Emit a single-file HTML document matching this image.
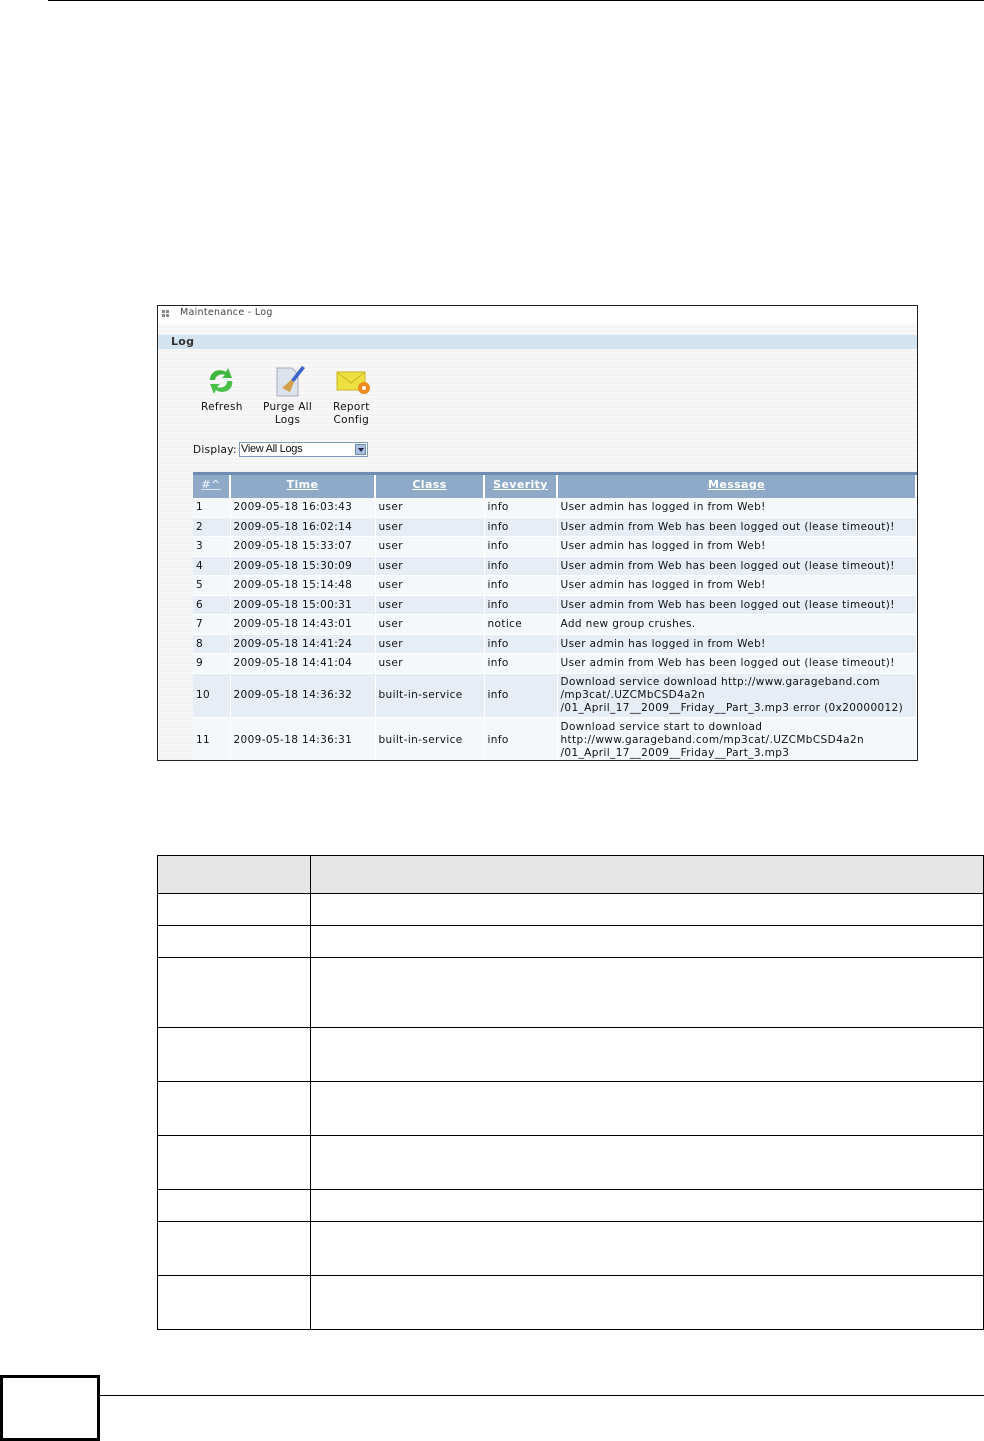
<!DOCTYPE html>
<html><head><meta charset="utf-8"><style>
*{margin:0;padding:0;box-sizing:border-box}
body{width:984px;height:1440px;background:#fff;position:relative;font-family:"DejaVu Sans","Liberation Sans",sans-serif;overflow:hidden}
.a{position:absolute}
.t{font-size:10.5px;color:#111;white-space:nowrap;letter-spacing:0.3px}
.frame{left:157px;top:305px;width:761px;height:456px;border:1px solid #222;background:repeating-linear-gradient(#f3f3f3 0 2px,#f8f8f8 2px 4px);overflow:hidden}
table.log{position:absolute;left:35px;top:166px;border-collapse:collapse;font-size:10.5px;color:#111;letter-spacing:0.38px}
table.log td{border-right:1px solid #fff;border-bottom:1px solid #fff;padding:0 0 0 3px;white-space:nowrap;line-height:13px}
table.log th{background:#8fa9c8;border-top:3px solid #6f8db3;border-right:2px solid #fff;color:#fff;text-decoration:underline;font-size:11px;height:24px;padding-bottom:3px;font-weight:bold}
tr.o td{background:#f5f8fb}
tr.e td{background:#e6edf4}
.bt{position:absolute;left:157px;top:855px;border-collapse:collapse}
.bt td{border:1px solid #000}
</style></head><body>
<div class="a" style="left:48px;top:0;width:936px;height:1px;background:#000"></div>

<div class="a frame">
  <div class="a" style="left:0;top:0;width:760px;height:18px;background:#fff"></div>
  <div class="a" style="left:4px;top:4px;width:3px;height:3px;background:#888;box-shadow:4px 0 #888,0 4px #888,4px 4px #888"></div>
  <div class="a t" style="left:22px;top:1px;font-size:9.5px;color:#444">Maintenance - Log</div>
  <div class="a" style="left:0;top:29px;width:760px;height:14px;background:#d3e3f0"></div>
  <div class="a t" style="left:13px;top:29px;font-weight:bold;color:#333;font-size:11px">Log</div>

  <svg class="a" style="left:46px;top:60px" width="34" height="30" viewBox="0 0 34 30">
    <path d="M6 14 A10 9 0 0 1 22 6 L24 2 L28 12 L18 12 L21 9 A7 6 0 0 0 11 14 Z" fill="#3db83d"/>
    <path d="M28 15 A10 9 0 0 1 12 24 L10 28 L6 18 L16 18 L13 21 A7 6 0 0 0 23 15 Z" fill="#4ac04a"/>
  </svg>
  <svg class="a" style="left:116px;top:58px" width="34" height="34" viewBox="0 0 34 34">
    <path d="M3 4 L18 4 L24 10 L24 32 L3 32 Z" fill="#dde3ec" stroke="#aab" stroke-width="1"/>
    <path d="M28 2 L31 4 L20 18 L17 16 Z" fill="#3a64c8"/>
    <path d="M17 16 L20 18 L16 28 L8 24 Z" fill="#d4a04a"/>
  </svg>
  <svg class="a" style="left:178px;top:64px" width="36" height="26" viewBox="0 0 36 26">
    <rect x="1" y="2" width="28" height="18" fill="#eee040" stroke="#c9b520"/>
    <path d="M1 2 L15 13 L29 2" fill="none" stroke="#c9b520"/>
    <circle cx="28" cy="18" r="6" fill="#f08a1a"/><circle cx="28" cy="18" r="2" fill="#fff"/>
  </svg>
  <div class="a t" style="left:43px;top:95px">Refresh</div>
  <div class="a t" style="left:105px;top:95px;text-align:center;line-height:13px">Purge All<br>Logs</div>
  <div class="a t" style="left:175px;top:95px;text-align:center;line-height:13px">Report<br>Config</div>

  <div class="a t" style="left:35px;top:138px">Display:</div>
  <div class="a" style="left:81px;top:136px;width:129px;height:15px;background:#fff;border:1px solid #7f9db9"></div>
  <div class="a t" style="left:83px;top:137px;font-family:'Liberation Sans',sans-serif;font-size:11px;letter-spacing:-0.3px">View All Logs</div>
  <div class="a" style="left:197px;top:138px;width:11px;height:11px;background:#a9c0e0;border:1px solid #6f8db3"></div>
  <div class="a" style="left:200px;top:142px;border-left:3px solid transparent;border-right:3px solid transparent;border-top:4px solid #224"></div>

  <table class="log">
    <tr><th style="width:37px;color:#dfe8f2">#^</th><th style="width:145px">Time</th><th style="width:109px">Class</th><th style="width:73px">Severity</th><th style="width:359px">Message</th></tr>
    <tr class="o" style="height:20px"><td>1</td><td>2009-05-18 16:03:43</td><td>user</td><td>info</td><td>User admin has logged in from Web!</td></tr>
    <tr class="e" style="height:19px"><td>2</td><td>2009-05-18 16:02:14</td><td>user</td><td>info</td><td>User admin from Web has been logged out (lease timeout)!</td></tr>
    <tr class="o" style="height:20px"><td>3</td><td>2009-05-18 15:33:07</td><td>user</td><td>info</td><td>User admin has logged in from Web!</td></tr>
    <tr class="e" style="height:19px"><td>4</td><td>2009-05-18 15:30:09</td><td>user</td><td>info</td><td>User admin from Web has been logged out (lease timeout)!</td></tr>
    <tr class="o" style="height:20px"><td>5</td><td>2009-05-18 15:14:48</td><td>user</td><td>info</td><td>User admin has logged in from Web!</td></tr>
    <tr class="e" style="height:19px"><td>6</td><td>2009-05-18 15:00:31</td><td>user</td><td>info</td><td>User admin from Web has been logged out (lease timeout)!</td></tr>
    <tr class="o" style="height:20px"><td>7</td><td>2009-05-18 14:43:01</td><td>user</td><td>notice</td><td>Add new group crushes.</td></tr>
    <tr class="e" style="height:19px"><td>8</td><td>2009-05-18 14:41:24</td><td>user</td><td>info</td><td>User admin has logged in from Web!</td></tr>
    <tr class="o" style="height:20px"><td>9</td><td>2009-05-18 14:41:04</td><td>user</td><td>info</td><td>User admin from Web has been logged out (lease timeout)!</td></tr>
    <tr class="e" style="height:44px"><td>10</td><td>2009-05-18 14:36:32</td><td>built-in-service</td><td>info</td><td>Download service download http://www.garageband.com<br>/mp3cat/.UZCMbCSD4a2n<br>/01_April_17__2009__Friday__Part_3.mp3 error (0x20000012)</td></tr>
    <tr class="o" style="height:45px"><td>11</td><td>2009-05-18 14:36:31</td><td>built-in-service</td><td>info</td><td>Download service start to download<br>http://www.garageband.com/mp3cat/.UZCMbCSD4a2n<br>/01_April_17__2009__Friday__Part_3.mp3</td></tr>
  </table>
</div>

<table class="bt">
  <tr style="height:38px"><td style="width:153px;background:#e6e6e6"></td><td style="width:674px;background:#e6e6e6"></td></tr>
  <tr style="height:32px"><td></td><td></td></tr>
  <tr style="height:32px"><td></td><td></td></tr>
  <tr style="height:70px"><td></td><td></td></tr>
  <tr style="height:54px"><td></td><td></td></tr>
  <tr style="height:54px"><td></td><td></td></tr>
  <tr style="height:54px"><td></td><td></td></tr>
  <tr style="height:32px"><td></td><td></td></tr>
  <tr style="height:54px"><td></td><td></td></tr>
  <tr style="height:54px"><td></td><td></td></tr>
</table>

<div class="a" style="left:0;top:1375px;width:100px;height:66px;border:3px solid #000"></div>
<div class="a" style="left:99px;top:1395px;width:885px;height:1px;background:#000"></div>
</body></html>
